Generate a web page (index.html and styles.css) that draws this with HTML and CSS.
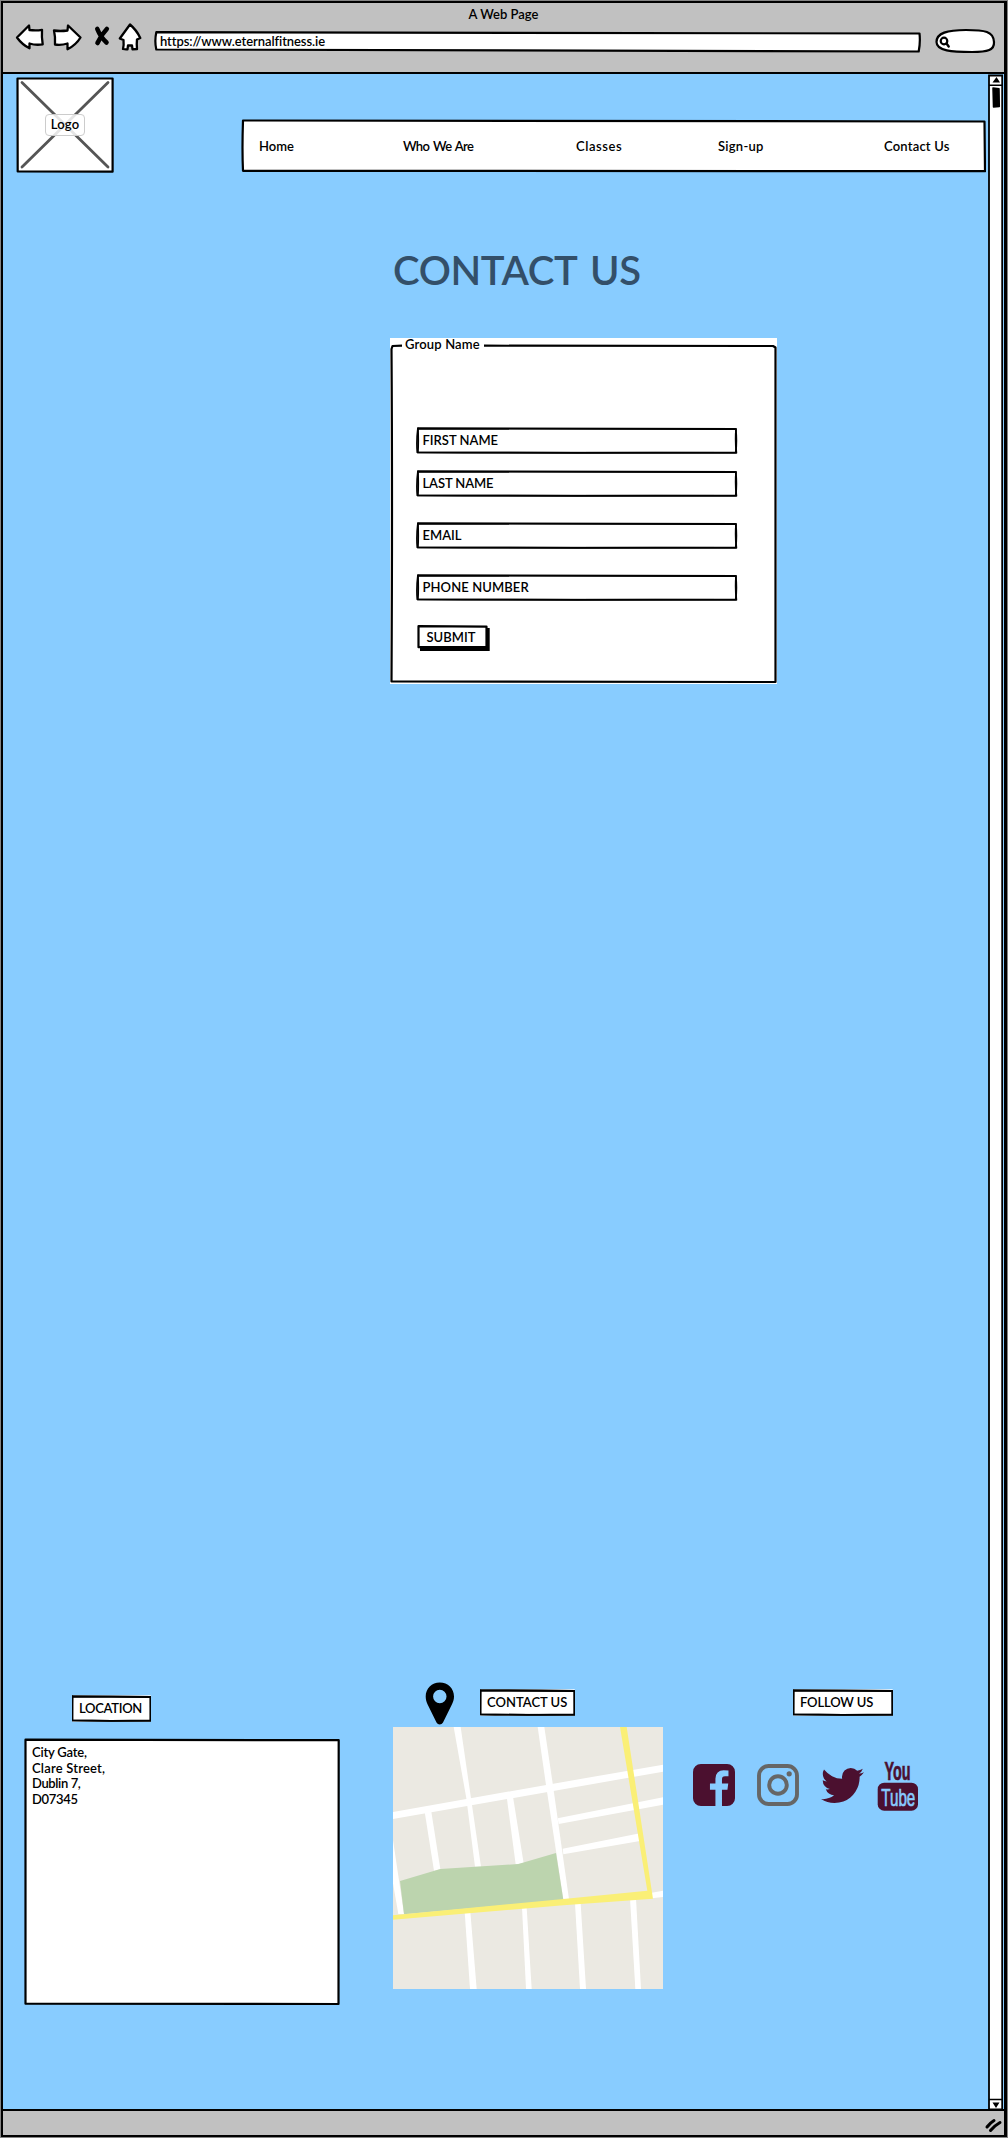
FILE: index.html
```html
<!DOCTYPE html>
<html lang="en">
<head>
<meta charset="utf-8">
<title>A Web Page</title>
<link rel="stylesheet" href="styles.css">
</head>
<body>
<svg class="defs" aria-hidden="true">
  <symbol id="frame" viewBox="0 0 100 100" preserveAspectRatio="none">
    <path d="M.4 1H99.700L99.900 99H.3V4Z" fill="#fff" stroke="none"/>
    <path vector-effect="non-scaling-stroke" d="M.6 4Q50 4 99.400 7Q99.100 50 99.500 96Q50 96 .4 94Q.1 50 .6 4Z"/>
    <path vector-effect="non-scaling-stroke" d="M.6 6Q60 7 99.300 8Q99.700 50 99.300 94Q50 97 .6 94Q.8 50 .6 5Z"/>
  </symbol>
</svg>
<div class="window">
  <header class="chrome">
    <div class="chrome-title">A Web Page</div>
    <div class="toolbar">
      <svg class="nav-icons" viewBox="3 22 150 49" width="150" height="49">
        <g fill="#fff" stroke="#000" stroke-width="2.300" stroke-linejoin="round">
          <path d="M17 37.500L29 25.500L29.500 30Q36 31 42 29.800Q41.500 37 42.700 44.300Q36 45.500 29.500 43.500L29.500 48.300Q22 44.500 17 37.500Z"/>
          <path d="M80.500 37.500L68 25.500L67.500 30.500Q60 31.500 54 30.500Q55.500 37 55 44.500Q61 45.500 67.500 43.500L67.500 49.300Q76 45 80.500 37.500Z"/>
          <path d="M130 24.500L119.800 38.500L123.500 40Q124 45 123 49Q125.500 49.600 127.500 49.300L128 45.500H132L132.500 49.300L137 49Q136.500 44 137 39.500L140.300 38Q136.500 30 130 24.500Z"/>
        </g>
        <path d="M97.300 29Q100.500 37 106.500 42.500M106.800 29Q101 35 97.500 43" fill="none" stroke="#000" stroke-width="4.600" stroke-linecap="round"/>
      </svg>
      <div class="url">
        <svg class="outline" viewBox="153 30 768 23"><path d="M156.300 32.200Q540 31.500 919.500 33.500Q920.500 42 918.700 51.500Q540 51.500 156.300 49.500Q154.400 41 156.300 32.200Z"/></svg>
        <span>https://www.eternalfitness.ie</span>
      </div>
      <svg class="search" viewBox="934 28 62 26" width="62" height="26">
        <path d="M936.500 42C936.500 33 947 30 966 30C985 30 993.500 31.500 994 42C994.500 50 988 52 972 52C952 52 936.500 51 936.500 42Z" fill="#fff" stroke="#000" stroke-width="2.200"/>
        <circle cx="944" cy="41" r="3.300" fill="#fff" stroke="#000" stroke-width="2.200"/>
        <path d="M946.500 43.500L948.700 46.500" stroke="#000" stroke-width="2.400" stroke-linecap="round"/>
      </svg>
    </div>
  </header>

  <div class="viewport">
    <main class="page">
      <div class="masthead">
        <div class="logo">
          <svg class="outline" viewBox="16 77 98 96">
            <path d="M17.500 78.500H112.600V171.700L17.700 171.500Z"/>
            <path class="cross" d="M22 82.500L108 167M108 82.500L22 167"/>
          </svg>
          <span>Logo</span>
        </div>
        <nav class="menu">
          <svg class="outline" viewBox="241 119 745 54"><path d="M243 120.500Q500 120.800 984.500 121.500L985 171.200Q600 171 243 170.800Q242 150 243 120.500Z"/></svg>
          <a>Home</a><a class="who">Who We Are</a><a class="classes">Classes</a><a class="sign">Sign-up</a><a class="contact">Contact Us</a>
        </nav>
      </div>

      <h1>CONTACT US</h1>

      <form class="group">
        <svg class="outline" viewBox="390 338 387 346"><path d="M402 345.700L392.500 346L391.500 349Q392.500 500 391.500 681.500L775.500 682L775.500 347.500L773 346L484 345.700"/></svg>
        <div class="legend">Group Name</div>
        <div class="field"><svg class="sketch"><use href="#frame"/></svg><span>FIRST NAME</span></div>
        <div class="field last"><svg class="sketch"><use href="#frame"/></svg><span>LAST NAME</span></div>
        <div class="field email"><svg class="sketch"><use href="#frame"/></svg><span>EMAIL</span></div>
        <div class="field phone"><svg class="sketch"><use href="#frame"/></svg><span>PHONE NUMBER</span></div>
        <div class="submit">
          <svg class="outline" viewBox="417 625 74 26"><path class="shadow" d="M420 628H489.700V651H420Z"/><path d="M418.500 626.200L486.500 626.600V647L418.500 647.200Z"/></svg>
          <span>SUBMIT</span>
        </div>
      </form>

      <footer class="footer">
        <section class="location">
          <div class="tag"><svg class="sketch"><use href="#frame"/></svg><span>LOCATION</span></div>
          <address>
            <svg class="outline" viewBox="24 1738 317 268"><path d="M25.500 1739.700Q200 1740.500 338.700 1740.200L338.500 2004L25.500 2003.700Z"/></svg>
            <span class="city">City Gate,</span><span class="street">Clare Street,</span><span class="dublin">Dublin 7,</span><span class="code">D07345</span>
          </address>
        </section>

        <section class="find">
          <div class="find-head">
            <svg viewBox="425 1682 30 43" width="30" height="43"><path fill-rule="evenodd" d="M439.800 1682.500C448 1682.500 454 1688.500 454 1696.500C454 1700 453 1702 452 1704.200L443 1722.500C441.500 1725 438 1725 436.500 1722.500L427.500 1704.200C426.500 1702 425.700 1700 425.700 1696.500C425.700 1688.500 431.800 1682.500 439.800 1682.500ZM439.800 1689.800A6.700 6.700 0 1 0 439.800 1703.200A6.700 6.700 0 1 0 439.800 1689.800Z"/></svg>
            <div class="tag"><svg class="sketch"><use href="#frame"/></svg><span>CONTACT US</span></div>
          </div>
          <svg class="map" viewBox="39 171 810 786" width="270" height="262">
            <path fill="#ebe9e2" d="M39 171h810v786H39z"/>
            <g fill="#fff">
              <path d="M39 426L520 341L849 284V305L520 363L39 447Z"/>
              <path d="M473 171H493L518 340L567 688H550L498 345Z"/>
              <path d="M221 171H242L273 385L303 590H285L259 385Z"/>
              <path d="M134 425H154L181 598L162 602Z"/>
              <path d="M380 380H399L431 580L407 583Z"/>
              <path d="M533 445L849 382V404L536 462Z"/>
              <path d="M548 536L780 490V513L550 553Z"/>
              <path d="M39 510L72 732H55L39 640Z"/>
              <path d="M254 725H271L290 957H270Z"/>
              <path d="M426 712H440L455 957H438Z"/>
              <path d="M585 700H602L618 957H600Z"/>
              <path d="M750 685H768L783 957H766Z"/>
              <path d="M815 668L849 662V681L815 685Z"/>
            </g>
            <path fill="#bcd4ae" d="M60 633L181 597L415 582L528 549L550 690L72 733Z"/>
            <path fill="#faef76" d="M720 171H740L819 686L550 706L39 749V736L550 687L802 662Z"/>
          </svg>
        </section>

        <section class="follow">
          <div class="tag"><svg class="sketch"><use href="#frame"/></svg><span>FOLLOW US</span></div>
          <div class="social">
            <svg viewBox="0 128 1536 1536" width="42" height="42"><path fill="#4b102f" d="M1248 128q119 0 203.500 84.500t84.500 203.500v960q0 119-84.500 203.500t-203.500 84.500h-188v-595h199l30-232h-229v-148q0-56 23.500-84t91.500-28l122-1v-207q-63-9-178-9-136 0-217.500 80t-81.500 226v171h-200v232h200v595h-532q-119 0-203.500-84.500t-84.500-203.500v-960q0-119 84.500-203.500t203.500-84.500h960z"/></svg>
            <svg class="instagram" viewBox="0 0 42 42" width="42" height="42"><g fill="none" stroke="#666" stroke-width="3.900"><rect x="2" y="2" width="38" height="38" rx="9.500"/><circle cx="21" cy="21" r="8.800"/></g><circle cx="32.200" cy="9.800" r="2.600" fill="#666"/></svg>
            <svg class="twitter" viewBox="44 256 1576 1280" width="43" height="35" preserveAspectRatio="none"><path fill="#4b102f" d="M1620 408q-67 98-162 167 1 14 1 42 0 130-38 259.500t-115.500 248.500-184.500 210.500-258 146-323 54.500q-271 0-496-145 35 4 78 4 225 0 401-138-105-2-188-64.500t-114-159.500q33 5 61 5 43 0 85-11-112-23-185.500-111.500t-73.500-205.500v-4q68 38 146 41-66-44-105-115t-39-154q0-88 44-163 121 149 294.500 238.500t371.500 99.500q-8-38-8-74 0-134 94.500-228.500t228.500-94.500q140 0 236 102 109-21 205-78-37 115-142 178 93-10 186-50z"/></svg>
            <svg class="youtube" viewBox="0 0 42 50" width="42" height="50">
              <text x="7.500" y="19" font-size="25" font-weight="700" fill="#4b102f" stroke="#4b102f" stroke-width=".7" textLength="26" lengthAdjust="spacingAndGlyphs">You</text>
              <rect x=".7" y="21.700" width="40.300" height="28" rx="6.500" fill="#4b102f"/>
              <text x="4.300" y="44.700" font-size="24" fill="#8cf" stroke="#8cf" stroke-width=".7" textLength="34" lengthAdjust="spacingAndGlyphs">Tube</text>
            </svg>
          </div>
        </section>
      </footer>
    </main>

    <svg class="scrollbar" viewBox="988 74 15 2035" width="15" height="2035">
      <path d="M989 75.500H1002.200V2110H989Z" fill="#fff" stroke="#000" stroke-width="1.800"/>
      <path d="M989 85.300H1002M989 2099.500H1002M989 2109.300H1002" stroke="#000" stroke-width="1.500"/>
      <path d="M996.500 77L1000 82.500H992.500ZM992.500 2102.500H999.500L996 2108Z"/>
      <path d="M993 88L999 88.800L999.300 106.500L993.500 107Z" stroke="#000" stroke-width="1.500" stroke-linejoin="round"/>
    </svg>
  </div>

  <div class="status">
    <svg viewBox="985 2117 20 17" width="20" height="17"><path d="M988 2127Q991 2123 995 2120.500M991.500 2130.500Q995 2126 1001 2122.500" stroke="#000" stroke-width="3" stroke-linecap="round" fill="none"/></svg>
  </div>
</div>
</body>
</html>
```
FILE: styles.css
```css
* { box-sizing: border-box; }

body {
  margin: 0;
  padding: 1px;
  background: #858585;
  font: 600 13px/16px Lato, "Liberation Sans", sans-serif;
  color: #000;
}

svg { display: block; flex: none; }
.defs { width: 0; height: 0; position: absolute; }

.window {
  height: 2136px;
  border: 2px solid #000;
  border-right-width: 3px;
  background: #8cf;
  display: flex;
  flex-direction: column;
}

/* Hand-drawn outlines sit behind the content of their box */
.outline, .sketch {
  position: absolute;
  inset: 0;
  width: 100%;
  height: 100%;
  fill: #fff;
  stroke: #000;
  stroke-width: 2.200px;
  stroke-linejoin: round;
}
.sketch { stroke-width: 1.700px; }
.sketch use { fill: none; }
.url, .logo, .menu, .group, .field, .submit, .tag, address { position: relative; }
.url span, .logo span, .menu a, .legend, .field span, .submit span, .tag span, address span { position: relative; white-space: nowrap; }

/* Browser chrome */
.chrome {
  height: 71px;
  background: #c1c1c1;
  border-bottom: 2.500px solid #000;
  padding-top: 3px;
}
.chrome-title { text-align: center; }
.toolbar { display: flex; align-items: flex-start; }
.url { width: 768px; height: 23px; margin-top: 8px; padding: 3px 0 0 7px; }
.url span { letter-spacing: -.08px; }
.search { margin: 6px 0 0 13px; }

.viewport { display: flex; height: 2035px; }
.page { flex: 1; display: flex; flex-direction: column; }
.scrollbar { margin-right: 1px; }

/* Masthead */
.masthead { display: flex; align-items: flex-start; padding: 3px 0 0 13px; }
.logo { width: 98px; height: 96px; display: flex; justify-content: center; padding-top: 37px; }
.logo .cross { stroke: #555; stroke-width: 2.800px; stroke-linecap: round; }
.logo span {
  width: 40px; height: 22px; line-height: 19px;
  text-align: center; letter-spacing: .2px;
  border: 1px solid #ccc; border-radius: 4px;
  background: rgba(255, 255, 255, .85);
}
.menu {
  width: 745px; height: 54px;
  margin: 42px 0 0 127px;
  padding: 19px 0 0 18px;
  display: grid;
  grid-template-columns: 144px 173px 142px 166px auto;
}
.menu .who { letter-spacing: -.65px; word-spacing: 1.300px; }
.menu .classes { letter-spacing: .55px; }
.menu .sign { letter-spacing: .25px; }
.menu .contact { letter-spacing: .2px; }

h1 {
  margin: 73px 0 0 390px;
  font-size: 40px; line-height: 48px; font-weight: 600;
  letter-spacing: -.35px; word-spacing: 4px;
  color: #334f69;
}

/* Contact form */
.group {
  width: 387px; height: 346px;
  margin: 44px 0 0 387px;
  padding-left: 26px;
  background: #fff;
}
.legend { margin: -2px 0 0 -11px; letter-spacing: .15px; }
.field { width: 322px; height: 27px; margin-top: 16px; padding: 5px 0 0 6.500px; }
.legend + .field { margin-top: 75px; }
.field.last span { letter-spacing: -.1px; }
.field.email, .field.phone { margin-top: 25px; }
.field.phone span { letter-spacing: .1px; }
.submit { width: 74px; height: 26px; margin: 24px 0 0 1px; padding: 4px 0 0 9.500px; }
.submit .shadow { fill: #000; stroke: none; }

/* Footer */
.footer { display: flex; align-items: flex-start; margin: 998px 0 0 21px; }
.tag { height: 27px; padding: 5px 0 0 7px; }
.location { width: 317px; padding-top: 13px; }
.location .tag { width: 79px; margin-left: 48px; letter-spacing: -.3px; }
address {
  height: 268px; margin-top: 16px; padding: 7px 8px;
  display: flex; flex-direction: column;
  font-style: normal; line-height: 15.500px;
}
.city { letter-spacing: -.2px; }
.street { letter-spacing: .2px; }
.dublin { letter-spacing: -.38px; }
.code { letter-spacing: -.3px; }

.find { width: 270px; margin-left: 52px; }
.find-head { display: flex; padding-left: 32px; height: 45px; }
.find .tag { width: 95px; margin: 7px 0 0 25px; }

.follow { padding-top: 7px; margin-left: 30px; }
.follow .tag { width: 100px; margin-left: 100px; letter-spacing: -.15px; }
.social { display: flex; margin-top: 48px; }
.instagram { margin-left: 22px; }
.twitter { margin: 4px 0 0 22px; }
.youtube { margin: -3px 0 0 13px; overflow: visible; font-family: "Liberation Sans", sans-serif; font-weight: 400; }

/* Status bar */
.status {
  flex: 1;
  background: #c1c1c1;
  border-top: 2.500px solid #000;
  display: flex; justify-content: flex-end;
  padding-top: 6px;
}
```
